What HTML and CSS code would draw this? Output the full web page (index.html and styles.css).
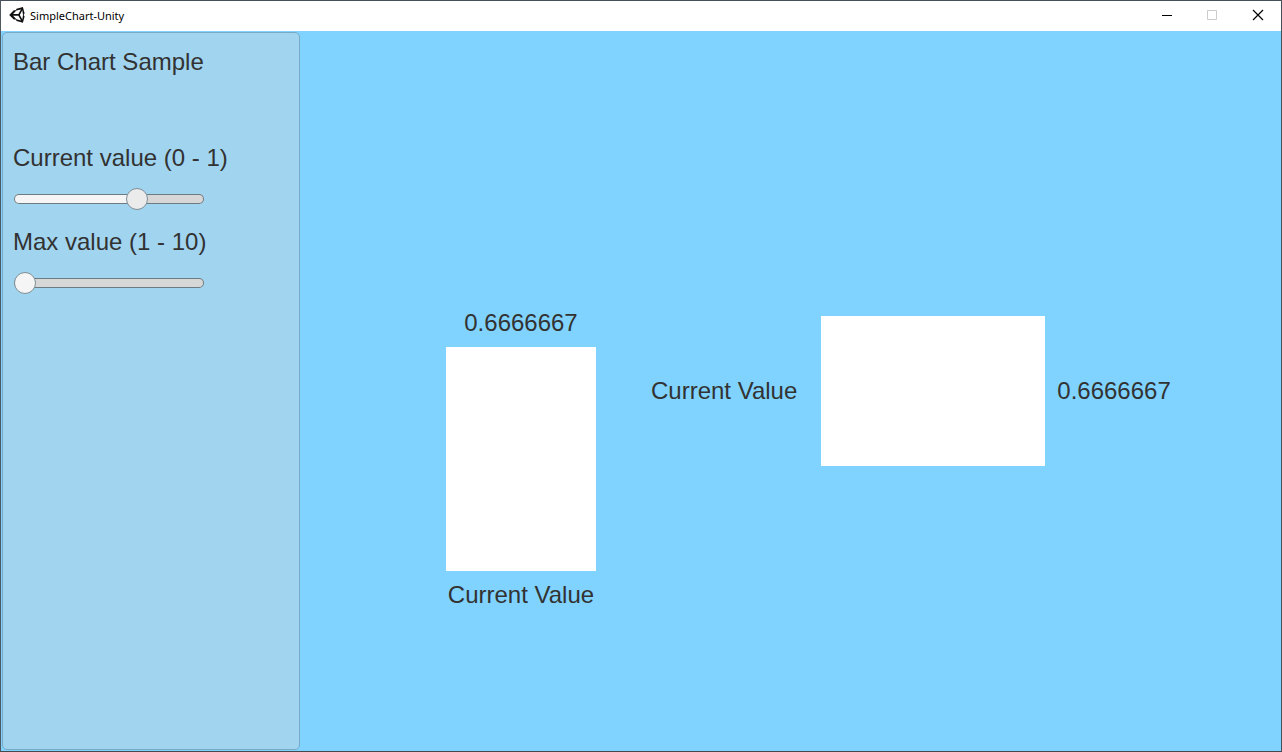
FILE: index.html
```html
<!DOCTYPE html>
<html lang="en">
<head>
<meta charset="utf-8">
<title>SimpleChart-Unity</title>
<link rel="stylesheet" href="styles.css">
</head>
<body>
<div class="window">
  <header class="titlebar">
    <svg class="app-icon" viewBox="0 0 16 16" aria-hidden="true">
      <path fill="#111" fill-rule="evenodd" d="M15.6 6.2 13.9 0 7.6 1.7 6.7 3.3H4.8L.2 7.9 4.8 12.5H6.7L7.6 14.1 13.9 15.8 15.6 9.6 14.6 7.9ZM7.4 3.6 12 2.4 9.4 7H4.1ZM7.4 12.2 4.1 8.8H9.4L12 13.4ZM13.3 12.6 10.8 7.9 13.3 3.2 14 7.9Z"/>
    </svg>
    <h1 class="app-title">SimpleChart-Unity</h1>
    <div class="window-buttons">
      <button class="window-button" type="button" aria-label="Minimize"><svg class="glyph" viewBox="0 0 12 12"><path d="M2 6.5H12" stroke="#000"/></svg></button>
      <button class="window-button" type="button" aria-label="Maximize" disabled><svg class="glyph" viewBox="0 0 12 12"><path d="M1.5 1.5H10.5V10.5H1.5Z" fill="none" stroke="#ccc"/></svg></button>
      <button class="window-button" type="button" aria-label="Close"><svg class="glyph" viewBox="0 0 12 12"><path d="M1 1 11 11M11 1 1 11" stroke="#000" stroke-width="1.2"/></svg></button>
    </div>
  </header>
  <main class="content">
    <aside class="panel">
      <h2 class="panel-title">Bar Chart Sample</h2>
      <div class="field">
        <label for="current">Current value (0 - 1)</label>
        <input class="slider slider-current" id="current" type="range" min="0" max="1" step="any" value="0.6666667">
      </div>
      <div class="field">
        <label for="max">Max value (1 - 10)</label>
        <input class="slider" id="max" type="range" min="1" max="10" step="any" value="1">
      </div>
    </aside>
    <section class="charts">
      <div class="chart chart-vertical">
        <span>0.6666667</span>
        <div class="bar"></div>
        <span>Current Value</span>
      </div>
      <div class="chart chart-horizontal">
        <span class="chart-label">Current Value</span>
        <div class="bar"></div>
        <span>0.6666667</span>
      </div>
    </section>
  </main>
</div>
</body>
</html>
```
FILE: styles.css
```css
* { box-sizing: border-box; }
body { margin: 0; color: #323232; font: 24px/28px "Liberation Sans", Arial, sans-serif; }
.window {
  display: flex;
  flex-direction: column;
  min-height: 100vh;
  border: 1px solid #46505b;
  border-left-color: #505860;
  border-bottom-color: #45494d;
  background: #80d3ff;
}
.titlebar { display: flex; align-items: center; height: 30px; padding-left: 8px; background: #fff; }
.titlebar > * { margin-bottom: 2px; }
.app-icon { width: 16px; height: 16px; }
.app-title { margin: 0 0 0 5px; color: #000; font: 11px/16px "Noto Sans", sans-serif; }
.window-buttons { display: flex; margin-left: auto; }
.window-button {
  display: flex;
  align-items: center;
  justify-content: center;
  width: 46px;
  height: 28px;
  padding: 0;
  border: 0;
  background: none;
}
.glyph { width: 12px; height: 12px; }
.content { display: flex; flex: 1; }
.panel {
  display: flex;
  flex-direction: column;
  gap: 18px;
  width: 298px;
  margin: 1px;
  padding: 15px 10px;
  border: 1px solid #76aac6;
  border-radius: 5px;
  background: #a1d4ef;
}
.panel-title { margin: 0 0 50px; font: inherit; }
.field { display: flex; flex-direction: column; gap: 16px; }
.slider {
  width: 190px;
  height: 22px;
  margin: 0 1px;
  appearance: none;
  background: none;
}
.slider::-webkit-slider-runnable-track {
  height: 10px;
  border-radius: 5px;
  box-shadow: inset 0 0 0 1px #6c7a82;
  background: #d7d7d7;
}
.slider-current::-webkit-slider-runnable-track { background: linear-gradient(to right, #f5f5f5 65%, #d7d7d7 65%); }
.slider::-webkit-slider-thumb {
  width: 22px;
  height: 22px;
  margin-top: -6px;
  appearance: none;
  border: 1px solid #7f8e96;
  border-radius: 50%;
  background: #f5f5f5;
}
.slider-current::-webkit-slider-thumb { background: #ebebeb; }
.charts { display: flex; flex: 1; align-items: flex-start; gap: 55px; padding: 278px 0 0 145px; white-space: nowrap; }
.chart { display: flex; align-items: center; }
.chart-vertical { flex-direction: column; gap: 10px; }
.chart-vertical .bar { width: 150px; height: 224px; }
.chart-horizontal { gap: 12px; margin-top: 7px; }
.chart-horizontal .bar { width: 224px; height: 150px; }
.chart-label { margin-right: 12px; }
.bar { background: #fff; }
```
